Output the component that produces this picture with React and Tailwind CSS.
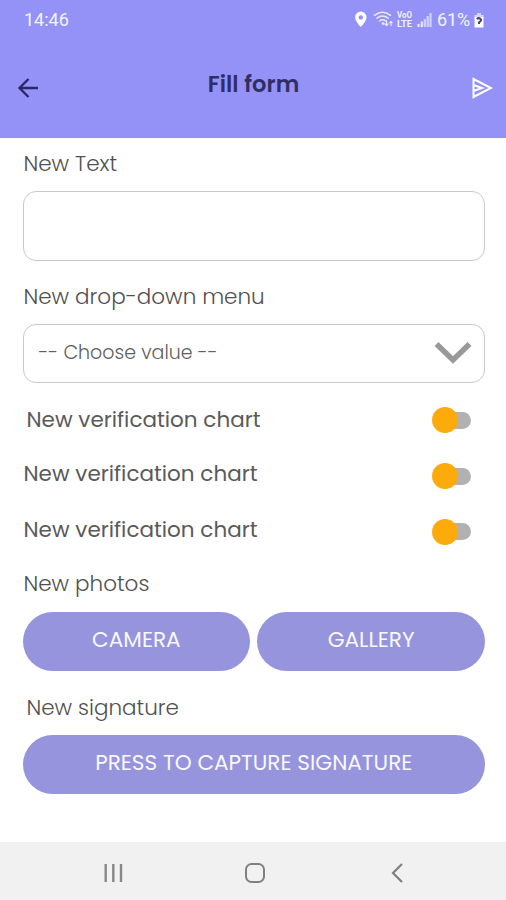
import React from "react";

const label = "flex items-center whitespace-nowrap text-[21.5px] leading-none";
const button =
  "flex h-[59px] items-center justify-center rounded-full bg-[#9694dc] pb-[2px] text-[21.6px] leading-none text-[#f8f8ff] whitespace-nowrap";

function StatusIcons() {
  return (
    <svg width="82" height="22" viewBox="354 9 82 22" fill="none">
      <path fillRule="evenodd" d="M360.800 11.500a5.700 5.700 0 0 0-5.700 5.700c0 4 5.700 9.800 5.700 9.800s5.700-5.800 5.700-9.800a5.700 5.700 0 0 0-5.700-5.700zm0 3.700a2.200 2.200 0 1 1 0 4.400 2.200 2.200 0 0 1 0-4.400z" fill="#fff" />
      <g stroke="#e9e9ff" strokeWidth="1.500" strokeLinecap="round">
        <path d="M374.500 15.300q8-6.300 16 0M377 18.200q5.500-4.300 11 0M379.500 21q3-2.400 6 0" />
        <path d="M386.500 20.500v5m-1.800-1.700 1.800 1.700 1.800-1.700M391 25.500v-4m-1.200 1.200 1.200-1.200 1.200 1.200" strokeWidth="1.200" />
      </g>
      <circle cx="383" cy="23.600" r="1.400" fill="#e9e9ff" />
      <g fontSize="9" fontWeight="700" fontFamily="Roboto, sans-serif" fill="#f0f0ff">
        <text x="397" y="18.300" textLength="15" lengthAdjust="spacingAndGlyphs">VoO</text>
        <text x="397" y="27" textLength="15" lengthAdjust="spacingAndGlyphs">LTE</text>
      </g>
      <path d="M418.500 24v3M421.800 21.500v5.500" stroke="#f0f0ff" strokeWidth="2" />
      <path d="M424.800 19v8M427.700 16v11M430.500 13v14" stroke="#cfcffb" strokeWidth="2.300" />
    </svg>
  );
}

function Toggle() {
  return (
    <div className="relative flex h-[26px] w-[39px] items-center" role="switch" aria-checked="false">
      <div className="ml-[10px] h-[17px] w-[29px] rounded-full bg-[#b1b1b1]" />
      <div className="absolute left-0 top-0 size-[26px] rounded-full bg-[#fcab0a]" />
    </div>
  );
}

export default function App() {
  return (
    <div className="flex h-[900px] w-[506px] flex-col overflow-hidden bg-white font-['Poppins','Inter',sans-serif] text-[#505050]">
      <header className="flex h-[137.500px] flex-col bg-[#9492f7]">
        <div className="flex h-[40px] items-center justify-between pl-[24px] pr-[21px] font-['Roboto',sans-serif] text-[18px] leading-none text-[#f2f2ff]">
          <span>14:46</span>
          <div className="flex items-center">
            <StatusIcons />
            <span className="ml-[1px] w-[36px] tracking-[-0.100px]">61%</span>
            <svg width="12" height="18" viewBox="0 0 12 18">
              <path d="M4 2h4v2h2.500v3h-9V4H4z" fill="#d4d4fc" />
              <path d="M1.500 6h9v10.500h-9z" fill="#fff" />
              <path d="M3.800 8q2-1.700 3.700 0T6 11.300v1.700" fill="none" stroke="#45456a" strokeWidth="2" />
            </svg>
          </div>
        </div>
        <div className="flex h-[96px] items-center justify-between pl-[17px] pr-[13px]">
          <svg width="23" height="22" viewBox="0 0 23 22" fill="none" stroke="#29266a" strokeWidth="2.300">
            <path d="M21 11H3M11.500 2 2.500 11l9 9" />
          </svg>
          <h1 className="pb-[7px] pr-[4px] text-[22.5px] font-semibold leading-none tracking-[0.100px] text-[#302f65]">Fill form</h1>
          <svg width="22" height="22" viewBox="0 0 22 22" fill="none" stroke="#fff" strokeWidth="2">
            <path d="M2.500 2v18L20 11zM2.500 8l8.500 3-8.500 3" />
          </svg>
        </div>
      </header>

      <main className="flex flex-1 flex-col pl-[22.500px] pr-[21px]">
        <div className={`${label} h-[53px] pb-[1px] pl-[1px] font-light`}>New Text</div>
        <div className="h-[70px] rounded-[13px] border-[1.500px] border-[#c9c9c9]" />
        <div className={`${label} h-[63px] pl-[1px] pt-[10px] font-light`}>New drop-down menu</div>
        <div className="flex h-[59px] items-center justify-between rounded-[13px] border-[1.500px] border-[#c9c9c9] pl-[15px] pr-[12px]">
          <span className="pb-[2px] text-[19px] font-light leading-none text-[#606060]">-- Choose value --</span>
          <svg width="38" height="24" viewBox="0 0 38 24" fill="none" stroke="#999" strokeWidth="5.500">
            <path d="M2.500 3 19 19 35.500 3" />
          </svg>
        </div>
        <div className="flex h-[75px] items-center justify-between pl-[4px] pr-[14px]">
          <span className={`${label} pb-[1px] text-[#5a5a5a]`}>New verification chart</span>
          <Toggle />
        </div>
        <div className="flex h-[37px] items-center justify-between pl-[1px] pr-[14px]">
          <span className={`${label} pb-[4px] text-[#5a5a5a]`}>New verification chart</span>
          <Toggle />
        </div>
        <div className="flex h-[74px] items-center justify-between pl-[1px] pr-[14px]">
          <span className={`${label} pb-[4px] text-[#5a5a5a]`}>New verification chart</span>
          <Toggle />
        </div>
        <div className={`${label} h-[43px] pb-[12px] pl-[1px] font-light`}>New photos</div>
        <div className="grid grid-cols-2 gap-[7px]">
          <button className={button}>CAMERA</button>
          <button className={button}>GALLERY</button>
        </div>
        <div className={`${label} h-[64px] pl-[4px] pt-[11px] font-light`}>New signature</div>
        <button className={button}>PRESS TO CAPTURE SIGNATURE</button>
      </main>

      <nav className="flex h-[58px] items-center bg-[#f1f1f1] pl-[103px] pt-[3px]">
        <svg width="21" height="22" viewBox="0 0 21 22" stroke="#888" strokeWidth="2.400">
          <path d="M2.700 2v18M10.300 2v18M18 2v18" />
        </svg>
        <svg className="ml-[120px]" width="22" height="22" viewBox="0 0 22 22" fill="none" stroke="#808080" strokeWidth="2">
          <rect x="2" y="2" width="18" height="18" rx="5.500" />
        </svg>
        <svg className="ml-[123px]" width="16" height="22" viewBox="0 0 16 22" fill="none" stroke="#808080" strokeWidth="2.200">
          <path d="M13 2 4 11l9 9" />
        </svg>
      </nav>
    </div>
  );
}
